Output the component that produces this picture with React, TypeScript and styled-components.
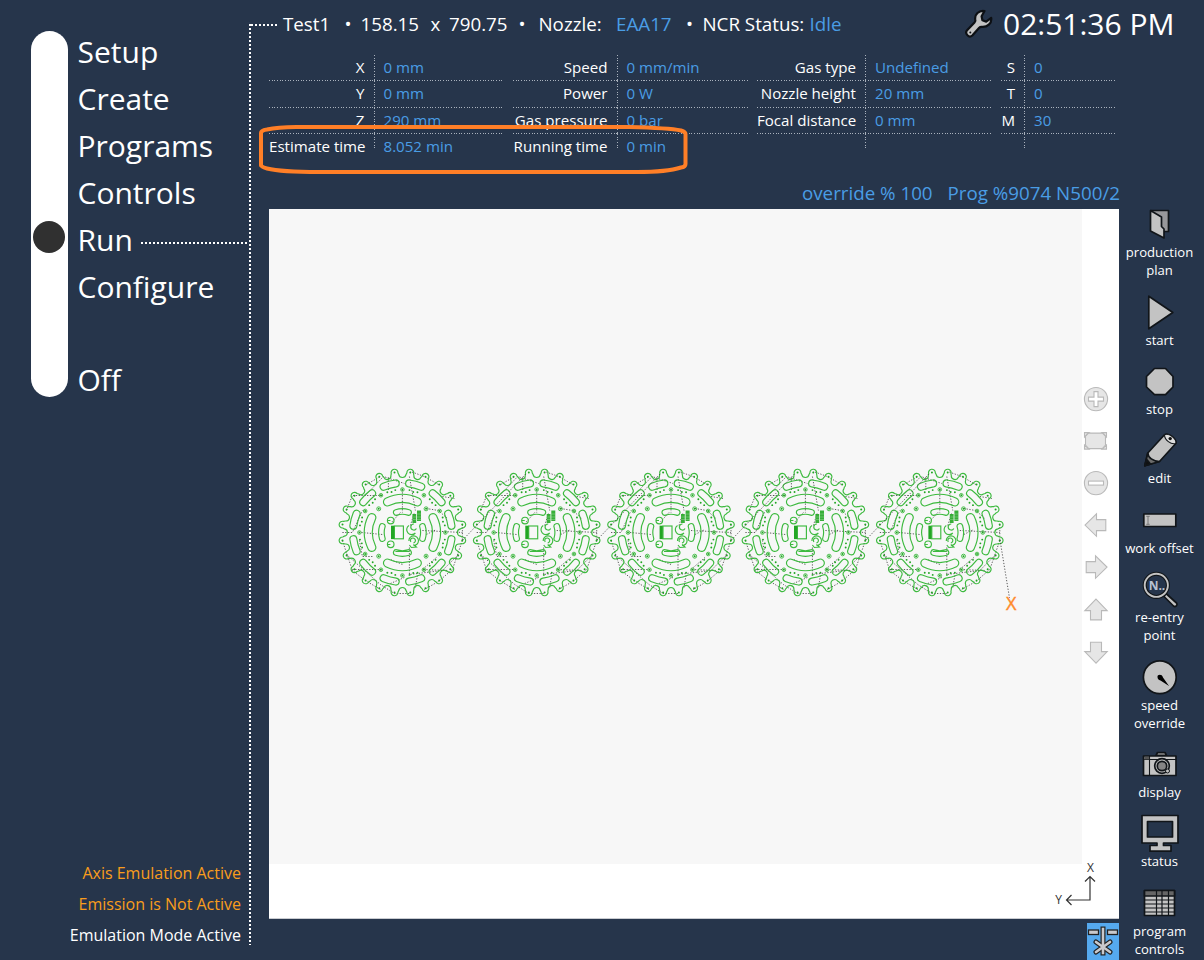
import React from "react";
import styled, { createGlobalStyle } from "styled-components";

const NAVY = "#26354b";
const BLUE = "#4a9de5";
const FONT = `"Open Sans", "Noto Sans", sans-serif`;

const Global = createGlobalStyle`
  body { margin: 0; background: ${NAVY}; }
  * { box-sizing: border-box; }
`;

const Shell = styled.div`
  display: flex;
  width: 1200px;
  height: 960px;
  overflow: hidden;
  background: ${NAVY};
  color: #fff;
  font-family: ${FONT};
`;

/* ---------- left navigation ---------- */

const Sidebar = styled.aside`
  width: 249px;
  display: flex;
  flex-direction: column;
  justify-content: space-between;
  padding: 28px 0 9px 31px;
`;

const Nav = styled.nav`
  display: flex;
`;

const Track = styled.div`
  width: 37px;
  height: 366px;
  margin-top: 3px;
  padding: 190px 0 0 2.4px;
  border-radius: 19px;
  background: #fff;
`;

const Knob = styled.div`
  width: 32px;
  height: 32px;
  border-radius: 50%;
  background: #303030;
`;

const Menu = styled.ul`
  flex: 1;
  margin: 0;
  padding: 0 0 0 9.5px;
  list-style: none;
`;

const MenuItem = styled.li<{ $spaced?: boolean }>`
  display: flex;
  align-items: center;
  height: 47px;
  margin-top: ${(p) => (p.$spaced ? "46px" : "0")};
  font-size: 30px;
  line-height: 47px;
`;

const Dots = styled.span<{ $shift?: number; $inset?: number }>`
  flex: 1;
  height: 2px;
  margin-top: ${(p) => p.$shift ?? 0}px;
  margin-left: ${(p) => p.$inset ?? 0}px;
  background: repeating-linear-gradient(90deg, #fff 0 2px, transparent 2px 4px);
`;

const Notices = styled.div`
  padding-right: 8px;
  text-align: right;
  font-size: 16px;
  line-height: 31px;
`;

const Notice = styled.div<{ $warn?: boolean }>`
  color: ${(p) => (p.$warn ? "#f99d1c" : "#fff")};
`;

const Divider = styled.div`
  width: 2px;
  height: 921px;
  margin-top: 24px;
  background: repeating-linear-gradient(180deg, #fff 0 2px, transparent 2px 4px);
`;

/* ---------- header ---------- */

const Content = styled.div`
  flex: 1;
  display: flex;
  flex-direction: column;
`;

const TopBar = styled.header`
  display: flex;
  align-items: center;
  height: 48px;
  padding-right: 25.5px;
`;

const Lead = styled.div`
  display: flex;
  width: 32px;
  padding-right: 5px;
  margin-top: 2px;
`;

const JobLine = styled.div`
  display: grid;
  grid-template-columns: 61.5px 16px 70px 18.5px 69.5px 20px 77.5px 70px 16.5px 107px auto;
  flex: 1;
  margin-top: -2px;
  font-size: 18.75px;
  white-space: nowrap;
`;

const Accent = styled.span`
  color: ${BLUE};
`;

const Clock = styled.div`
  margin-left: 9.5px;
  font-size: 30px;
  line-height: 48px;
`;

const Readouts = styled.section`
  position: relative;
  display: flex;
  gap: 9px;
  margin-top: 7px;
  padding-left: 18px;
`;

const Group = styled.div<{ $width: number; $label: number }>`
  display: grid;
  grid-template-columns: ${(p) => p.$label}px 1fr;
  grid-template-rows: 26.4px 26.4px 26.4px 16px;
  width: ${(p) => p.$width}px;
  font-size: 15.1px;
  line-height: 24.4px;
  white-space: nowrap;
`;

const dash = "repeating-linear-gradient(90deg, #aab2bd 0 1px, transparent 1px 2.65px)";
const dashV = "repeating-linear-gradient(180deg, #aab2bd 0 1px, transparent 1px 2.65px)";

const Label = styled.div<{ $last?: boolean }>`
  padding-right: 9px;
  text-align: right;
  background: ${(p) => (p.$last ? "none" : dash)} left bottom / 100% 1px no-repeat;
`;

const Value = styled.div<{ $last?: boolean }>`
  padding-left: 10px;
  color: ${BLUE};
  background:
    ${dashV} left top / 1px 100% no-repeat,
    ${(p) => (p.$last ? "none" : dash)} left bottom / 100% 1px no-repeat;
`;

const Highlight = styled.svg`
  position: absolute;
  left: 6px;
  top: 66px;
  overflow: visible;
`;

/* ---------- body ---------- */

const Body = styled.div`
  display: flex;
  flex: 1;
  margin-top: 26px;
`;

const Main = styled.main`
  width: 868px;
  padding-left: 18px;
`;

const ProgramLine = styled.div`
  display: flex;
  justify-content: flex-end;
  gap: 15px;
  height: 33px;
  margin-right: -1px;
  color: ${BLUE};
  font-size: 18.75px;
  line-height: 33px;
  white-space: nowrap;
`;

const Canvas = styled.div`
  display: grid;
  grid-template-columns: 813px 37px;
  grid-template-rows: 655px 55px;
  height: 710px;
  background: #fff;
  border-bottom: 1px solid #c9ccd1;
`;

const Sheet = styled.svg`
  display: block;
  background: #f7f7f7;
`;

const ViewTools = styled.div`
  display: flex;
  flex-direction: column;
  align-items: center;
  padding: 168.5px 9px 0 0;
`;

const ViewTool = styled.svg`
  width: 26px;
  height: 42.2px;
  flex: none;
  fill: #e6e6e6;
  stroke: #b9b9b9;
  stroke-width: 1.1;
`;

const AxisCell = styled.div`
  grid-column: 1 / -1;
  display: flex;
  justify-content: flex-end;
  padding-right: 19px;
  margin-top: -4px;
`;

const Footer = styled.div`
  display: flex;
  justify-content: flex-end;
  padding-top: 4px;
`;

const FooterButton = styled.div`
  width: 32px;
  height: 37px;
  background: #55a9ee;
`;

/* ---------- action rail ---------- */

const Rail = styled.div`
  flex: 1;
  padding-top: 29px;
`;

const Action = styled.div`
  display: flex;
  flex-direction: column;
  align-items: center;
  margin-bottom: 13.42px;
  font-size: 13.1px;
  line-height: 18px;
  text-align: center;
  white-space: pre-line;
`;

const Glyph = styled.svg`
  width: 44px;
  height: 38px;
  fill: #c3c3c3;
  stroke: #111519;
  stroke-width: 1.7;
  stroke-linejoin: round;
`;

/* ---------- sprocket drawing ---------- */

const rad = (deg: number) => (deg * Math.PI) / 180;
const at = (r: number, deg: number) => [r * Math.sin(rad(deg)), -r * Math.cos(rad(deg))];
const pt = (r: number, deg: number) => at(r, deg).map((n) => n.toFixed(2)).join(" ");

const sprocketEdge = () => {
  let d = "";
  for (let i = 0; i < 24; i++) {
    const a = 7.5 + i * 15;
    const c = 3.2;
    d += `${i ? "L" : "M"}${pt(59.8, a - c)}A3.4 3.4 0 1 1 ${pt(59.8, a + c)}`;
    d += `L${pt(58.2, a + 3.9)}A3.7 3.7 0 0 0 ${pt(58.2, a + 11.1)}`;
  }
  return d + "Z";
};

const kidney = (mid: number, half: number, w: number, a: number) => {
  const o = mid + w;
  const i = mid - w;
  return `M${pt(o, a - half)}A${o} ${o} 0 0 1 ${pt(o, a + half)}A${w} ${w} 0 0 1 ${pt(i, a + half)}A${i} ${i} 0 0 0 ${pt(i, a - half)}A${w} ${w} 0 0 1 ${pt(o, a - half)}Z`;
};

const steps = (n: number, from: number, by: number) => Array.from({ length: n }, (_, i) => from + i * by);

const EDGE = sprocketEdge();
const KIDNEYS = [
  ...steps(4, 0, 90).map((a) => kidney(34, 26, 4, a)),
  ...steps(4, 0, 90).map((a) => kidney(21, 17, 2.8, a)),
  ...steps(12, 15, 30).map((a) => kidney(49.5, 7.4, 3.5, a)),
].join("");

const Sprocket = ({ x, y }: { x: number; y: number }) => (
  <g transform={`translate(${x} ${y})`}>
    <g fill="none" stroke="#444" strokeWidth=".85" strokeDasharray="1.3 1.5">
      <path d="M0 -43V-20M7 -56L13 -22M-37 -37L-19 -56L2 -49M-56 -22L-50 -37L-20 -37M-60 0H-50L-40 -22M-41 0L-20 2M20 -2L60 0M24 2L34 -3M-50 37L-22 37M-56 22L-22 52L-8 61H8M0 32L-12 27M7 15V42L40 38L56 22M34 25L20 37L46 38M15 43L13 55M-12 51L2 45M40 -36L52 -34M24 -24L36 -22L45 -14M-2 -20L-11 -10M8 -7L12 -20M-30 24H-40L-43 8M-14 -55V-42" />
      <path d="M-60 8L-50 38L-37 48L-22 57M60 8L50 37L36 49L22 57M-36 -48L-22 -56M36 -48L22 -56L8 -61M60 -8V8" />
    </g>
    <g fill="none" stroke="#3dba3f" strokeWidth="1.15">
      <path d={EDGE} />
      <path d={KIDNEYS} />
      {steps(12, 0, 30).map((a) => {
        const [cx, cy] = at(43, a);
        return <circle key={a} cx={cx} cy={cy} r="1.8" strokeWidth=".9" />;
      })}
      {steps(4, 45, 90).map((a) => {
        const [cx, cy] = at(33.5, a);
        return <circle key={a} cx={cx} cy={cy} r="2" strokeWidth=".9" />;
      })}
      <circle cx="-11.7" cy="-12" r="3.3" />
      <circle cx="-11.7" cy="11.8" r="3.3" />
      <rect x="-8" y="-6.5" width="9" height="12.8" />
      <path d="M14 -4A3 3 0 1 1 11.500 -8.500M6.500 -7A5 5 0 1 0 13 .5M6.500 8.500A4.800 4.800 0 1 1 11 13M8.500 9.500A2.500 2.500 0 1 1 11 10.500M7 12.500L9 15L14 14.500L11 12" />
      <path d="M-12 -12H-15M-12 12H-15M-7 19H7" />
    </g>
    <g fill="#22a624">
      <rect x="-11.4" y="-6.8" width="3.2" height="13.4" />
      <path d="M10 -18.500h3.800v9h-3.800zM14.600 -22h4v10.500h-4z" fillOpacity=".9" />
      <path d="M10 -15.500h9M10 -13h9M14 -18.500h5" stroke="#bfe8bf" strokeWidth=".35" />
      {steps(12, 0, 30).map((a) =>
        [0, 9.5, 15, 20.5].map((off) => {
          const [cx, cy] = at(off === 15 ? 42 : 43, a + off);
          return <circle key={`${a}-${off}`} cx={cx} cy={cy} r="0.95" />;
        })
      )}
      {steps(24, 7.5, 15).map((a) => {
        const [cx, cy] = at(60.4, a);
        return <circle key={a} cx={cx} cy={cy} r="1" />;
      })}
      {steps(4, 45, 90).map((a) => {
        const [cx, cy] = at(33.5, a);
        return <circle key={a} cx={cx} cy={cy} r="1" />;
      })}
    </g>
  </g>
);

const CENTERS = [133.4, 267.7, 402, 536.4, 670.8];

const Nesting = () => (
  <Sheet width="813" height="655" viewBox="0 0 813 655">
    {CENTERS.map((x) => (
      <Sprocket key={x} x={x} y={323.5} />
    ))}
    <g fill="none" stroke="#444" strokeWidth=".9" strokeDasharray="1.2 1.7">
      {CENTERS.slice(1).map((x) => (
        <path key={x} d={`M${x - 74} 331L${x - 10} 264`} />
      ))}
      <path d="M731 331L740.500 389" />
    </g>
    <text
      x="742.300"
      y="400.500"
      textAnchor="middle"
      fontFamily={FONT}
      fontSize="18"
      fill="#ff8a2a"
      stroke="#ff8a2a"
      strokeWidth=".4"
    >
      X
    </text>
  </Sheet>
);

/* ---------- icons ---------- */

const Wrench = () => (
  <svg width="28" height="30" viewBox="0 0 28 30" fill="#c3c3c3" stroke="#0d1014" strokeWidth="2.200" strokeLinejoin="round">
    <path d="M19.500 2C14 1 9.300 5.500 10.300 10.800C10.500 11.700 10.300 12.400 9.500 13.400L2.100 21.200C-.6 24.200 3.800 29.600 7.300 26.500L14.200 18.700C14.900 18 15.600 17.800 16.800 17.900C22.300 18.400 27 14.500 26.200 8.800L21.200 12.600L17.400 11.200L16.600 7.200Z" />
    <circle cx="5.300" cy="23.600" r="1" fill="#0d1014" stroke="none" />
  </svg>
);

const icons: Record<string, React.ReactNode> = {
  folder: (
    <>
      <path d="M12.500 5.500H30.500V26.500H25" fill="#98989a" />
      <path d="M12.500 5.500L23.500 12V21.500L26 24V33L12.500 26Z" />
    </>
  ),
  play: <path d="M10.800 3.200L34.800 19.500L10.800 35.800Z" />,
  octagon: <path d="M16.500 6.500H27.500L35 14.500V25L27.500 32.700H16.500L8.500 25V14.500Z" />,
  pencil: (
    <>
      <path d="M9.800 22L26.500 3.700C31 1.500 39 8 37.800 12.500L21.500 30.500L6.800 34.700Z" />
      <path d="M9.800 22C10 26.500 15 30.500 21.500 30.500L6.800 34.700Z" fill="#6d6d6d" />
      <path d="M8.700 28.500L12.500 33L6.800 34.700Z" fill="#111" />
      <path d="M26.500 3.700C31 1.500 39 8 37.800 12.500C33 14 26.500 9 26.500 3.700Z" fill="#ddd" strokeWidth="1.100" />
      <circle cx="32.200" cy="7.600" r="1.700" fill="#111" stroke="none" />
    </>
  ),
  field: (
    <>
      <rect x="5.800" y="13" width="32" height="12.500" />
      <path d="M8.300 15.300h3.400M10 15.300v8M8.300 23.300h3.400" stroke="#777" strokeWidth="1" />
    </>
  ),
  magnifier: (
    <>
      <path d="M28 23.500L38.500 33C40 35 37.500 37.500 35.500 36L26 26.500Z" />
      <circle cx="18.300" cy="15.300" r="11.600" fill="none" stroke="#111519" strokeWidth="4" />
      <circle cx="18.300" cy="15.300" r="11.600" fill="none" stroke="#c3c3c3" strokeWidth="1.900" />
      <text x="19" y="19.500" textAnchor="middle" fontFamily={FONT} fontSize="12" fontWeight="700" stroke="none" fill="#b9c3d2">
        N..
      </text>
    </>
  ),
  dial: (
    <>
      <circle cx="21.800" cy="19.300" r="16.400" />
      <path d="M19.500 19C19 16.500 24 15.500 25 19.500L31 28L22.500 22.500C20.500 22 19.500 21 19.500 19Z" fill="#000" stroke="none" />
    </>
  ),
  camera: (
    <>
      <path d="M18 10.500L19.500 7.500H27L28.500 10.500Z" fill="#8a8a8a" />
      <rect x="5.500" y="11" width="32.500" height="19.500" />
      <path d="M11.500 11V30.500M5.500 14.500H38" fill="none" strokeWidth="1.100" />
      <rect x="6.200" y="12" width="5" height="2.500" fill="#555" stroke="none" />
      <circle cx="24" cy="21" r="7.300" />
      <circle cx="24" cy="21" r="4.700" fill="#858585" />
      <circle cx="29.500" cy="26" r="2" strokeWidth="1" />
    </>
  ),
  monitor: (
    <>
      <path d="M4 1.500H40V29H25.500V31.500H33V37.200H12V31.500H19V29H4Z" />
      <rect x="9.500" y="7.500" width="25" height="15.500" fill={NAVY} />
    </>
  ),
  table: (
    <>
      <rect x="6.500" y="6.500" width="30" height="25" />
      <rect x="6.500" y="6.500" width="30" height="5.500" fill="#666" />
      <path d="M6.500 16H36.500M6.500 20H36.500M6.500 24H36.500M6.500 28H36.500M18.500 6.500V31.500M24 6.500V31.500M30.500 6.500V31.500" strokeWidth="1.200" />
    </>
  ),
};

const actions = [
  ["folder", "production\nplan"],
  ["play", "start"],
  ["octagon", "stop"],
  ["pencil", "edit"],
  ["field", "work offset"],
  ["magnifier", "re-entry\npoint"],
  ["dial", "speed\noverride"],
  ["camera", "display"],
  ["monitor", "status"],
  ["table", "program\ncontrols"],
];

const arrow = "M-11 0L.500 -11.200V-5.500H9.800V5.500H.500V11.200Z";

const viewTools: React.ReactNode[] = [
  <>
    <circle r="11.600" />
    <path d="M-2 -7.500H2V-2H7.500V2H2V7.500H-2V2H-7.500V-2H-2Z" fill="#fff" />
  </>,
  <>
    <path d="M-10.500 -5L-7.500 -8H6.500L9.500 -5V4L6.500 7.500H-7.500L-10.500 4Z" />
    <path d="M-11.500 -4V-8.500H-7L-9 -7ZM10.500 -4V-8.500H6L8 -7ZM-11.500 4V8H-7ZM10.500 4V8H6Z" />
  </>,
  <>
    <circle r="11.600" />
    <rect x="-7.500" y="-2" width="15" height="4" fill="#fff" />
  </>,
  <path d={arrow} />,
  <path d={arrow} transform="rotate(180)" />,
  <path d={arrow} transform="rotate(90)" />,
  <path d={arrow} transform="rotate(-90)" />,
];

/* ---------- data ---------- */

const groups = [
  { width: 235, label: 104.5, rows: [["X", "0 mm"], ["Y", "0 mm"], ["Z", "290 mm"], ["Estimate time", "8.052 min"]] },
  { width: 235, label: 103.5, rows: [["Speed", "0 mm/min"], ["Power", "0 W"], ["Gas pressure", "0 bar"], ["Running time", "0 min"]] },
  { width: 235, label: 108, rows: [["Gas type", "Undefined"], ["Nozzle height", "20 mm"], ["Focal distance", "0 mm"], ["", ""]] },
  { width: 114, label: 23, rows: [["S", "0"], ["T", "0"], ["M", "30"], ["", ""]] },
];

export default function App() {
  return (
    <Shell>
      <Global />
      <Sidebar>
        <Nav>
          <Track>
            <Knob />
          </Track>
          <Menu>
            <MenuItem>Setup</MenuItem>
            <MenuItem>Create</MenuItem>
            <MenuItem>Programs</MenuItem>
            <MenuItem>Controls</MenuItem>
            <MenuItem>
              Run
              <Dots $shift={6} $inset={8} />
            </MenuItem>
            <MenuItem>Configure</MenuItem>
            <MenuItem $spaced>Off</MenuItem>
          </Menu>
        </Nav>
        <Notices>
          <Notice $warn>Axis Emulation Active</Notice>
          <Notice $warn>Emission is Not Active</Notice>
          <Notice>Emulation Mode Active</Notice>
        </Notices>
      </Sidebar>
      <Divider />
      <Content>
        <TopBar>
          <Lead>
            <Dots />
          </Lead>
          <JobLine>
            <span>Test1</span>
            <span>•</span>
            <span>158.15</span>
            <span>x</span>
            <span>790.75</span>
            <span>•</span>
            <span>Nozzle:</span>
            <Accent>EAA17</Accent>
            <span>•</span>
            <span>NCR Status:</span>
            <Accent>Idle</Accent>
          </JobLine>
          <Wrench />
          <Clock>02:51:36 PM</Clock>
        </TopBar>
        <Readouts>
          {groups.map((g) => (
            <Group key={g.label} $width={g.width} $label={g.label}>
              {g.rows.map(([label, value], i) => (
                <React.Fragment key={i}>
                  <Label $last={i === 3}>{label}</Label>
                  <Value $last={i === 3}>{value}</Value>
                </React.Fragment>
              ))}
            </Group>
          ))}
          <Highlight width="432" height="54" viewBox="0 0 432 54" fill="none" stroke="#ff7f27" strokeWidth="4" strokeLinejoin="round">
            <path d="M4 44.500V12Q4 9.500 10 8.500Q22 5.500 46 6H372Q412 7 424 9.500Q428.500 11 428.500 13V43Q428.500 46 424 46.500Q410 51 380 51H62Q24 51 10 47.500Q4 46 4 43.500Z" />
          </Highlight>
        </Readouts>
        <Body>
          <Main>
            <ProgramLine>
              <span>override % 100</span>
              <span>Prog %9074 N500/2</span>
            </ProgramLine>
            <Canvas>
              <Nesting />
              <ViewTools>
                {viewTools.map((shape, i) => (
                  <ViewTool key={i} viewBox="-13 -21.1 26 42.2">
                    {shape}
                  </ViewTool>
                ))}
              </ViewTools>
              <AxisCell>
                <svg width="50" height="50" viewBox="0 -4 50 50" fill="none" stroke="#333" strokeWidth="1.200">
                  <path d="M40 13V36H17M35 17.500L40 12.500L45 17.500M21.500 31L16.500 36L21.500 41" />
                  <g fill="#333" stroke="none" fontFamily={FONT} fontSize="12" textAnchor="middle">
                    <text x="40.500" y="8">X</text>
                    <text x="8.500" y="39.500">Y</text>
                  </g>
                </svg>
              </AxisCell>
            </Canvas>
            <Footer>
              <FooterButton>
                <svg width="32" height="37" viewBox="0 0 32 37" fill="#c9c9cc" stroke="#222" strokeWidth="1.300">
                  <rect x="1.500" y="7" width="10" height="4.500" />
                  <rect x="20.500" y="7" width="10" height="4.500" />
                  <g strokeLinecap="round">
                    <path d="M9 19L23 29M23 19L9 29" strokeWidth="5" />
                    <path d="M16 3.500V32.500" strokeWidth="5" strokeLinecap="butt" />
                    <path d="M9 19L23 29M23 19L9 29" stroke="#c9c9cc" strokeWidth="2.700" />
                    <path d="M16 4.700V31.300" stroke="#c9c9cc" strokeWidth="2.600" strokeLinecap="butt" />
                  </g>
                </svg>
              </FooterButton>
            </Footer>
          </Main>
          <Rail>
            {actions.map(([icon, text]) => (
              <Action key={icon}>
                <Glyph viewBox="0 0 44 38">{icons[icon]}</Glyph>
                {text}
              </Action>
            ))}
          </Rail>
        </Body>
      </Content>
    </Shell>
  );
}
